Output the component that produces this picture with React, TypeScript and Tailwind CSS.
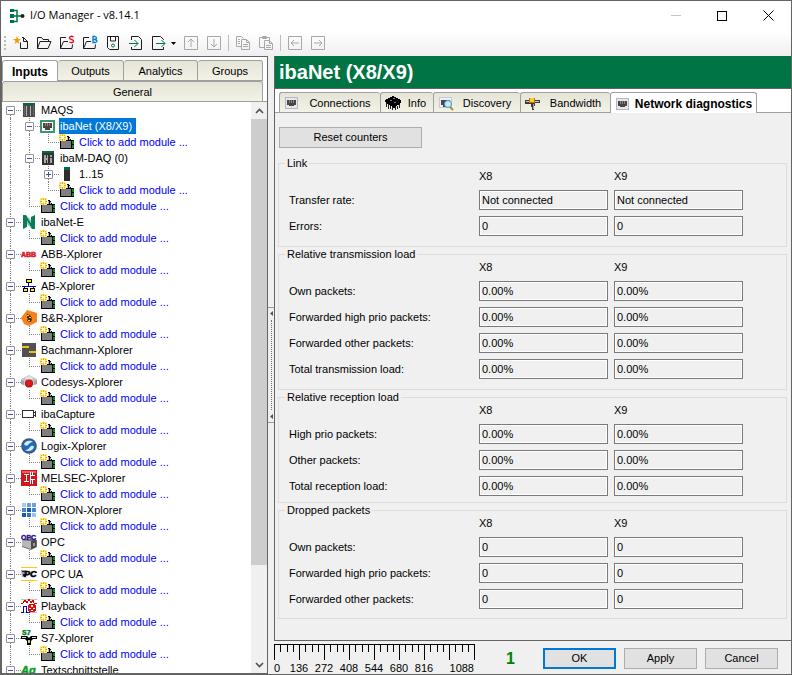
import type { ReactNode } from 'react';

type TreeNode = {
    label: string;
    icon: ReactNode;
    children?: TreeNode[];
    collapsed?: boolean;
    selected?: boolean;
    link?: boolean;
};

type Guide = 'line' | 'blank';

const Icon = ({ children }: { children: ReactNode }) => (
    <svg width="16" height="16" viewBox="0 0 16 16" fill="none" className="shrink-0" shapeRendering="crispEdges" aria-hidden="true">
        {children}
    </svg>
);

/* ---------- tree icons ---------- */

const AddModuleIcon = () => (
    <Icon>
        <path d="M1 6h7V2h2v1h1v2h1v1h1v9H1z" fill="#000" />
        <path d="M2 7h10v7H2z" fill="#808080" />
        <path d="M8 3h1v3H8zM10 4h1v2h-1z" fill="#b8b8b8" />
        <path d="M13 6h2v9h-2z" fill="#000" />
        <path d="M13 7h2v3h-2zM13 11h2v3h-2z" fill="#008c1e" />
        <path d="M0 0h7v7H0z" fill="#ffe680" />
        <path d="M3 0h1v7H3zM0 3h7v1H0zM1 1h1v1H1zM5 1h1v1H5zM1 5h1v1H1zM5 5h1v1H5z" fill="#e8b400" />
        <path d="M2 2h3v3H2z" fill="#fffce0" />
    </Icon>
);

const RackIcon = () => (
    <Icon>
        <path d="M2 1h12v14H2z" fill="#4a4a4a" />
        <path d="M2 1h12v2H2z" fill="#006b3f" />
        <path d="M5 4h1v10H5zM9 4h1v10H9z" fill="#b5b5b5" />
        <path d="M3 4h1v10H3zM12 4h1v10h-1z" fill="#666" />
    </Icon>
);

const PortIcon = () => (
    <Icon>
        <path d="M1 2h13v12H1z" fill="#b4b8c2" />
        <path d="M2 3h11v10H2z" fill="#e6e7ec" />
        <path d="M3 5h9v5h-2v1H5v-1H3z" fill="#4a4545" />
        <path d="M5 5h1v3H5zM7 5h1v3H7zM9 5h1v3H9z" fill="#8f836a" />
    </Icon>
);

const NetPortIcon = () => (
    <Icon>
        <path d="M0 2h15v13H0z" fill="#3a9670" />
        <path d="M2 4h11v9H2z" fill="#fff" />
        <path d="M3 5h9v5h-2v2H5v-2H3z" fill="#4a4545" />
        <path d="M5 5h1v3H5zM7 5h1v3H7zM9 5h1v3H9z" fill="#8f836a" />
    </Icon>
);

const DaqIcon = () => (
    <Icon>
        <path d="M2 2h12v13H2z" fill="#333" />
        <path d="M2 1h12v2H2z" fill="#006b3f" />
        <path d="M4 5h2v3h1V5h1v8H7v-3H6v3H4zM10 5h2v2h-2zM10 8h2v5h-2z" fill="#a8a8a8" />
    </Icon>
);

const SlotIcon = () => (
    <Icon>
        <path d="M5 2h6v13H5z" fill="#2d2d2d" />
        <path d="M5 1h6v3H5z" fill="#006b3f" />
    </Icon>
);

const NetEIcon = () => (
    <svg width="16" height="16" viewBox="0 0 16 16" className="shrink-0" aria-hidden="true">
        <path d="M2 1h3l5 8V3l4-2v14h-3L6 7v6l-4 2z" fill="#0b7d56" />
        <path d="M5 1l5 5v3zM6 7l5 8-5-5z" fill="#8ccbb2" />
    </svg>
);

const AbbIcon = () => (
    <svg width="16" height="16" viewBox="0 0 16 16" className="shrink-0" aria-hidden="true">
        <text x="0" y="11" fontSize="7" fontWeight="700" fill="#d8202c" stroke="#d8202c" strokeWidth=".6">ABB</text>
    </svg>
);

const AbIcon = () => (
    <Icon>
        <path d="M7 5h1v3h7v1h-2v2h-1V9H4v2H3V9H1V8h6z" fill="#0000c8" />
        <path d="M5 1h6v4H5zM2 10h5v4H2zM9 10h5v4H9z" fill="#000" />
        <path d="M6 2h4v2H6zM3 11h3v2H3zM10 11h3v2h-3z" fill="#ffee00" />
    </Icon>
);

const BrIcon = () => (
    <svg width="16" height="16" viewBox="0 0 16 16" className="shrink-0" aria-hidden="true">
        <path d="M0 8l6-8 10 3v9l-8 4-5-2z" fill="#f5821f" />
        <path d="M6 4l3 1 2 3-1 1-4-1zM7 8l4 1-1 3-4-1z" fill="#4a2c00" />
        <path d="M6 5h2v1H6zM8 7h2v1H8zM7 10h2v1H7z" fill="#ffd400" />
    </svg>
);

const BachmannIcon = () => (
    <Icon>
        <path d="M1 1h14v14H1z" fill="#505055" />
        <path d="M1 4h7v2H1zM8 9h7v2H8z" fill="#f5c400" />
    </Icon>
);

const CodesysIcon = () => (
    <svg width="16" height="16" viewBox="0 0 16 16" className="shrink-0" aria-hidden="true">
        <path d="M0 5l8-4 8 4v5l-3 1H3l-3-1z" fill="#c4c4c4" />
        <path d="M3 4l5-2 5 2-5 2z" fill="#e2e2e2" />
        <path d="M0 6l3 1v4l-3-1zM16 6l-3 1v4l3-1z" fill="#a4a4a4" />
        <circle cx="8" cy="9.500" r="4" fill="#b80c12" />
        <circle cx="8" cy="9" r="3" fill="#dc1a20" />
    </svg>
);

const CaptureIcon = () => (
    <Icon>
        <path d="M1 4h12v8H1z" fill="#303030" />
        <path d="M2 5h10v6H2z" fill="#fff" />
        <path d="M13 6h1v1h-1zM13 9h1v1h-1zM14 5h1v6h-1z" fill="#303030" />
    </Icon>
);

const LogixIcon = () => (
    <svg width="16" height="16" viewBox="0 0 16 16" className="shrink-0" aria-hidden="true">
        <circle cx="8" cy="8" r="7.800" fill="#42566d" />
        <circle cx="8" cy="8" r="6.300" fill="#1a6cc4" />
        <path d="M3 6c2-4 7-4 9-2-3 0-4 2-5 3S4 8 3 6zM13 9c-1 4-6 5-9 3 3 0 4-2 5-3s3-2 4 0z" fill="#d6ecff" />
    </svg>
);

const MelsecIcon = () => (
    <Icon>
        <path d="M0 0h16v16H0z" fill="#d6141c" />
        <path d="M1 1h14v2H1z" fill="#ee5c58" />
        <path d="M3 4h5v1H6v6h2v1H3v-1h2V5H3zM9 2h1v3h4v1h-4v3h4v1h-4v4H9zM11 2h1v4h-1zM11 9h1v5h-1z" fill="#fff" />
    </Icon>
);

const OmronIcon = () => (
    <Icon>
        <path d="M1 1h4v4H1z" fill="#a9c8ee" />
        <path d="M6 1h4v4H6zM11 1h4v4h-4z" fill="#6aa0e0" />
        <path d="M1 6h4v4H1zM11 6h4v4h-4z" fill="#4a86d0" />
        <path d="M6 6h4v4H6zM1 11h4v4H1z" fill="#1658b8" />
        <path d="M6 11h4v4H6z" fill="#2e70cc" />
        <path d="M11 11h4v4h-4z" fill="#9cc0ec" />
    </Icon>
);

const OpcIcon = () => (
    <svg width="16" height="16" viewBox="0 0 16 16" className="shrink-0" aria-hidden="true">
        <path d="M1 6l9-2 6 2v7l-6 3-9-3z" fill="#707070" />
        <path d="M1 6l9 1v8l-9-3z" fill="#b8b8b8" />
        <path d="M10 7l5-1v7l-5 2z" fill="#4a4a4a" />
        <path d="M12 9h2v3h-2z" fill="#999" />
        <text x="0" y="6" fontSize="7" fontWeight="700" fill="#2a0a8c" stroke="#2a0a8c" strokeWidth=".4">OPC</text>
    </svg>
);

const OpcUaIcon = () => (
    <svg width="16" height="16" viewBox="0 0 16 16" className="shrink-0" aria-hidden="true">
        <path d="M0 1h16v1H0zM0 14h16v1H0z" fill="#ffc800" />
        <path d="M0 4h5l1 2-1 5H1z" fill="#9a9eb8" />
        <path d="M1 5h3v1H1zM2 8h3v2H2z" fill="#222" />
        <text x="3" y="11" fontSize="9" fontWeight="700" fontStyle="italic" fill="#000" stroke="#000" strokeWidth=".6">PC</text>
    </svg>
);

const PlaybackIcon = () => (
    <Icon>
        <path d="M0 1h16v1H0zM0 14h16v1H0z" fill="#c0c0c0" />
        <path d="M0 5h2l2-3 2 3 2-4 2 4 2-3 1 3h3" stroke="#e80000" />
        <path d="M0 14h2V8h3v6h3V9" stroke="#0000d8" />
        <circle cx="11" cy="10" r="4.500" fill="#e01010" />
        <path d="M10 7h2v2h-2zM8 10h2v1H8zM12 10h2v1h-2zM10 12h2v1h-2z" fill="#fff" />
    </Icon>
);

const S7Icon = () => (
    <svg width="16" height="16" viewBox="0 0 16 16" className="shrink-0" aria-hidden="true">
        <text x="1" y="5" fontSize="7" fontWeight="700" fill="#007a20" stroke="#007a20" strokeWidth=".4">S7</text>
        <path d="M0 6h6l2 2 2-2h6v3h-4l-2 2v4H6v-4L4 9H0z" fill="#000" />
        <path d="M1 7h4v1H1zM11 7h4v1h-4z" fill="#ddd" />
        <path d="M7 10h2v3H7z" fill="#d8c850" />
    </svg>
);

const TextIcon = () => (
    <svg width="16" height="16" viewBox="0 0 16 16" className="shrink-0" aria-hidden="true">
        <text x="0" y="12" fontSize="11" fontWeight="700" fontStyle="italic" fill="#00a31a" stroke="#00a31a" strokeWidth=".5">Ag</text>
    </svg>
);

const addModule: TreeNode = { label: 'Click to add module ...', icon: <AddModuleIcon />, link: true };

const tree: TreeNode[] = [
    {
        label: 'MAQS',
        icon: <RackIcon />,
        children: [
            { label: 'ibaNet (X8/X9)', icon: <NetPortIcon />, selected: true, children: [addModule] },
            {
                label: 'ibaM-DAQ (0)',
                icon: <DaqIcon />,
                children: [{ label: '1..15', icon: <SlotIcon />, collapsed: true }, addModule],
            },
            addModule,
        ],
    },
    { label: 'ibaNet-E', icon: <NetEIcon />, children: [addModule] },
    { label: 'ABB-Xplorer', icon: <AbbIcon />, children: [addModule] },
    { label: 'AB-Xplorer', icon: <AbIcon />, children: [addModule] },
    { label: 'B&R-Xplorer', icon: <BrIcon />, children: [addModule] },
    { label: 'Bachmann-Xplorer', icon: <BachmannIcon />, children: [addModule] },
    { label: 'Codesys-Xplorer', icon: <CodesysIcon />, children: [addModule] },
    { label: 'ibaCapture', icon: <CaptureIcon />, children: [addModule] },
    { label: 'Logix-Xplorer', icon: <LogixIcon />, children: [addModule] },
    { label: 'MELSEC-Xplorer', icon: <MelsecIcon />, children: [addModule] },
    { label: 'OMRON-Xplorer', icon: <OmronIcon />, children: [addModule] },
    { label: 'OPC', icon: <OpcIcon />, children: [addModule] },
    { label: 'OPC UA', icon: <OpcUaIcon />, children: [addModule] },
    { label: 'Playback', icon: <PlaybackIcon />, children: [addModule] },
    { label: 'S7-Xplorer', icon: <S7Icon />, children: [addModule] },
    { label: 'Textschnittstelle', icon: <TextIcon />, children: [] },
];

const Branch = ({ node, first, last }: { node: TreeNode; first: boolean; last: boolean }) => (
    <span className="relative flex w-[19px] shrink-0 flex-col pl-2">
        <span className={`h-[9px] border-b border-dotted border-[#808080] ${first ? '' : 'border-l'}`} />
        <span className={`h-[7px] border-dotted border-[#808080] ${last ? '' : 'border-l'}`} />
        {(node.children || node.collapsed) && (
            <button
                aria-label={`${node.collapsed ? 'Expand' : 'Collapse'} ${node.label}`}
                className="absolute top-1 left-1 h-[9px] w-[9px] rounded-[1px] border border-[#919191] bg-white"
            >
                <span className="absolute top-[3px] left-px h-px w-[5px] bg-[#3a55a8]" />
                {node.collapsed && <span className="absolute top-px left-[3px] h-[5px] w-px bg-[#3a55a8]" />}
            </button>
        )}
    </span>
);

const TreeItems = ({ nodes, guides = [] }: { nodes: TreeNode[]; guides?: Guide[] }) => (
    <ul>
        {nodes.map((node, i) => {
            const last = i === nodes.length - 1;
            return (
                <li key={`${node.label}-${i}`}>
                    <div className="flex h-4 whitespace-nowrap">
                        {guides.map((guide, g) => (
                            <span key={g} className="w-[19px] shrink-0 pl-2">
                                {guide === 'line' && <span className="block h-4 border-l border-dotted border-[#808080]" />}
                            </span>
                        ))}
                        <Branch node={node} first={i === 0 && guides.length === 0} last={last} />
                        {node.icon}
                        {node.link ? (
                            <a href="#add" className="ml-[3px] px-px leading-4 text-[#0000ff]">{node.label}</a>
                        ) : (
                            <span className={`ml-[3px] px-px leading-4 ${node.selected ? 'bg-[#0078d7] pr-1 text-white' : ''}`}>
                                {node.label}
                            </span>
                        )}
                    </div>
                    {node.children && <TreeItems nodes={node.children} guides={[...guides, last ? 'blank' : 'line']} />}
                </li>
            );
        })}
    </ul>
);

/* ---------- toolbar ---------- */

const folder = 'M1.500 13.500v-11h4l1.500 2h5.500v2M1.500 13.500h10.500l3-7H4z';
const openFolder = 'M7 2.500H1.500v11h11.500l.5-4M1.500 13.500l3-7H9';
const dark = '#1c1c1c';
const dim = '#a8a8a8';

const toolGroups: { label: string; icon: ReactNode; menu?: boolean }[][] = [
    [
        {
            label: 'New',
            icon: (
                <>
                    <path d="M7.500 7.500v6h7v-7l-4-4H9M10.500 2.500v4h4" stroke={dark} />
                    <path d="M4 1l1 3h3L5.500 6l1 3L4 7.300 1.500 9l1-3L0 4h3z" fill="#f59a0c" />
                </>
            ),
        },
        { label: 'Open', icon: <path d={folder} stroke={dark} /> },
        {
            label: 'Open S',
            icon: (
                <>
                    <path d={openFolder} stroke={dark} />
                    <path d="M14.500 2C13 1 10.500 1 10.500 3s4 1 4 3-2.500 2-4 1" stroke="#e81123" strokeWidth="1.500" />
                </>
            ),
        },
        {
            label: 'Open B',
            icon: (
                <>
                    <path d={openFolder} stroke={dark} />
                    <path d="M11 1.500v6h2.500q1.500-.5 1.500-1.500t-2-1.500h-2 2q1.500-.5 1.500-1.500t-1.500-1.500z" stroke="#0078d7" strokeWidth="1.300" />
                </>
            ),
        },
        {
            label: 'Save',
            icon: (
                <>
                    <path d="M2.500 1.500h11v13h-9l-2-2zM5.500 2v4h5V2" stroke={dark} />
                    <circle cx="8" cy="10.500" r="1.500" stroke="#007443" />
                </>
            ),
        },
        {
            label: 'Import',
            icon: (
                <>
                    <path d="M3.500 5V1.500h7l3 3v10h-10V12" stroke={dark} />
                    <path d="M1 8.500h9M6.500 5l3.500 3.500L6.500 12" stroke="#007443" />
                </>
            ),
        },
        {
            label: 'Export',
            menu: true,
            icon: (
                <>
                    <path d="M12.500 5V4.500l-3-3h-8v13h11V12" stroke={dark} />
                    <path d="M5 8.500h9M10.500 5l3.500 3.500-3.500 3.500" stroke="#007443" />
                </>
            ),
        },
        { label: 'Move up', icon: <path d="M1.500 1.500h13v13h-13zM8 12V4M5 7l3-3 3 3" stroke={dim} /> },
        { label: 'Move down', icon: <path d="M1.500 1.500h13v13h-13zM8 4v8M5 9l3 3 3-3" stroke={dim} /> },
    ],
    [
        {
            label: 'Copy',
            icon: <path d="M6 11.500H1.500v-10h5l2 2M6.500 4.500h5l3 3v7h-8zM11.500 4.500v3h3M3 4.500h2M3 6.500h2M3 8.500h2M8 9.500h5M8 11.500h5" stroke={dim} />,
        },
        {
            label: 'Paste',
            icon: <path d="M6 12.500H1.500v-10h10V5M4.500 1.500h4v2h-4zM6.500 5.500h5l3 3v6h-8zM11.500 5.500v3h3M8 10.500h5M8 12.500h5" stroke={dim} />,
        },
    ],
    [
        { label: 'Back', icon: <path d="M1.500 1.500h13v13h-13zM12 8H4M7 5L4 8l3 3" stroke={dim} /> },
        { label: 'Forward', icon: <path d="M1.500 1.500h13v13h-13zM4 8h8M9 5l3 3-3 3" stroke={dim} /> },
    ],
];

const Toolbar = () => (
    <div role="toolbar" className="flex h-[25px] shrink-0 items-center bg-gradient-to-b from-white to-[#efefef] pb-px pl-[3px]">
        <span className="mr-[3px] h-[14px] border-l-2 border-dotted border-[#bbb]" />
        {toolGroups.map((group, i) => (
            <div key={i} className="flex items-center">
                {i > 0 && <span className="ml-[3px] mr-[2px] h-4 w-px bg-[#bdbdbd]" />}
                {group.map((tool) => (
                    <button key={tool.label} aria-label={tool.label} className="flex h-6 items-center pr-[3px] pl-1">
                        <svg width="16" height="16" viewBox="0 0 16 16" fill="none" aria-hidden="true">
                            {tool.icon}
                        </svg>
                        {tool.menu && (
                            <svg width="5" height="3" viewBox="0 0 5 3" className="ml-1" aria-hidden="true">
                                <path d="M0 0h5L2.500 3z" fill="#000" />
                            </svg>
                        )}
                    </button>
                ))}
            </div>
        ))}
    </div>
);

const TitleBar = () => (
    <header className="flex h-[30px] shrink-0 items-center bg-white pb-px pl-2">
        <svg width="16" height="16" viewBox="0 0 16 16" fill="none" aria-hidden="true">
            <path d="M4 2.500h4v11H4M4 8h9" stroke="#007443" strokeWidth="1.500" />
            <path d="M1 1h4v3H1zM1 6h4v4H1zM1 12h4v3H1z" fill="#007443" />
            <circle cx="13.500" cy="8" r="2" fill="#222" />
        </svg>
        <h1 className="ml-[5px] flex-1 font-['Open_Sans','Noto_Sans',sans-serif] text-[11px]">I/O Manager - v8.14.1</h1>
        <button aria-label="Minimize" className="flex h-full w-[46px] items-center justify-center">
            <span className="h-px w-[10px] bg-[#c4c4c4]" />
        </button>
        <button aria-label="Maximize" className="flex h-full w-[46px] items-center justify-center">
            <span className="h-[10px] w-[10px] border border-black" />
        </button>
        <button aria-label="Close" className="flex h-full w-[46px] items-center justify-center">
            <svg width="11" height="11" viewBox="0 0 11 11" aria-hidden="true">
                <path d="M.5.5l10 10M10.500.5l-10 10" stroke="#000" />
            </svg>
        </button>
    </header>
);

/* ---------- left panel ---------- */

const Sidebar = () => (
    <aside className="flex w-[267px] shrink-0 flex-col border border-[#646464] bg-white">
        <div role="tablist" className="mr-1 pt-[3px]">
            <div className="grid grid-cols-[56px_66px_74px_1fr]">
                <button role="tab" aria-selected="true" className="h-[21px] rounded-t-[3px] border border-b-0 border-[#a0a0a0] bg-white pt-px text-xs font-bold">
                    Inputs
                </button>
                {['Outputs', 'Analytics', 'Groups'].map((name) => (
                    <button
                        key={name}
                        role="tab"
                        aria-selected="false"
                        className="h-[21px] rounded-t-[3px] border border-l-0 border-[#a0a0a0] bg-gradient-to-b from-[#e5e4d6] to-[#f3f2e8] pt-px"
                    >
                        {name}
                    </button>
                ))}
            </div>
            <button
                role="tab"
                aria-selected="false"
                className="block h-5 w-full rounded-t-[3px] border border-b-0 border-[#a0a0a0] bg-gradient-to-b from-[#e5e4d6] to-[#f3f2e8] pt-px"
            >
                General
            </button>
        </div>
        <div className="flex min-h-0 flex-1 border-t border-[#a0a0a0]">
            <nav aria-label="Modules" className="min-w-0 flex-1 overflow-hidden">
                <TreeItems nodes={tree} />
            </nav>
            <div className="flex w-4 shrink-0 flex-col bg-[#f0f0f0]">
                <button aria-label="Scroll up" className="flex h-[17px] items-center justify-center">
                    <svg width="9" height="6" viewBox="0 0 9 6" fill="none" aria-hidden="true">
                        <path d="M1 5l3.500-3.500L8 5" stroke="#505050" strokeWidth="1.600" />
                    </svg>
                </button>
                <div className="flex-1">
                    <div className="h-[83%] bg-[#cdcdcd]" />
                </div>
                <button aria-label="Scroll down" className="flex h-[17px] items-center justify-center">
                    <svg width="9" height="6" viewBox="0 0 9 6" fill="none" aria-hidden="true">
                        <path d="M1 1l3.500 3.500L8 1" stroke="#505050" strokeWidth="1.600" />
                    </svg>
                </button>
            </div>
        </div>
    </aside>
);

const Splitter = () => (
    <div className="flex w-[6px] shrink-0 flex-col justify-center">
        <div className="flex h-[116px] flex-col items-center justify-between border-y border-[#9a9a9a] py-[3px]">
            <svg width="3" height="5" viewBox="0 0 3 5" aria-hidden="true">
                <path d="M3 0v5L0 2.500z" fill="#555" />
            </svg>
            <span className="my-1 flex-1 border-l border-dotted border-[#707070]" />
            <svg width="3" height="5" viewBox="0 0 3 5" aria-hidden="true">
                <path d="M3 0v5L0 2.500z" fill="#555" />
            </svg>
        </div>
    </div>
);

/* ---------- right panel ---------- */

const ChipIcon = () => (
    <Icon>
        <path d="M0 5l8-4 8 4v3l-7 5-9-6z" fill="#000" />
        <path d="M1 8h1v4H1zM3 9h1v5H3zM5 11h1v3H5zM7 12h1v3H7zM10 12h1v3h-1zM12 11h1v3h-1zM14 9h1v4h-1z" fill="#222" />
        <path d="M5 5h2v1H5zM8 3h2v1H8zM9 7h2v1H9z" fill="#777" />
    </Icon>
);

const DiscoveryIcon = () => (
    <svg width="16" height="16" viewBox="0 0 16 16" fill="none" className="shrink-0" aria-hidden="true">
        <path d="M1 2h13v11H1z" fill="#c5cad6" />
        <path d="M2 3h11v9H2z" fill="#eef0f4" />
        <path d="M3 5h9v5h-2v2H5v-2H3z" fill="#4a4545" />
        <path d="M12 12l3 3" stroke="#c58a20" strokeWidth="2" />
        <circle cx="10" cy="9" r="3.500" fill="#c8e8fb" stroke="#4d93cc" />
    </svg>
);

const BandwidthIcon = () => (
    <Icon>
        <path d="M0 5h15v3h-5l-1 7H7L6 9H0z" fill="#3c3c3c" />
        <path d="M1 6h13v1H1z" fill="#c8c8c8" />
        <path d="M8 9h1v5H8z" fill="#aaa" />
        <path d="M4 3h6v5H4z" fill="#b87b00" />
        <path d="M5 3h4v4H5z" fill="#ffc933" />
    </Icon>
);

const pageTabs = [
    { label: 'Connections', icon: <PortIcon />, width: 'w-[101px]', active: false },
    { label: 'Info', icon: <ChipIcon />, width: 'w-[53px]', active: false },
    { label: 'Discovery', icon: <DiscoveryIcon />, width: 'w-[87px]', active: false },
    { label: 'Bandwidth', icon: <BandwidthIcon />, width: 'w-[90px]', active: false },
    { label: 'Network diagnostics', icon: <PortIcon />, width: 'w-[147px]', active: true },
];

const groups = [
    { title: 'Link', pad: 'pb-[10px]', rows: [['Transfer rate:', 'Not connected'], ['Errors:', '0']] },
    {
        title: 'Relative transmission load',
        pad: 'pb-[10px]',
        rows: [
            ['Own packets:', '0.00%'],
            ['Forwarded high prio packets:', '0.00%'],
            ['Forwarded other packets:', '0.00%'],
            ['Total transmission load:', '0.00%'],
        ],
    },
    {
        title: 'Relative reception load',
        pad: 'pb-[6px]',
        rows: [
            ['High prio packets:', '0.00%'],
            ['Other packets:', '0.00%'],
            ['Total reception load:', '0.00%'],
        ],
    },
    {
        title: 'Dropped packets',
        pad: 'pb-[9px]',
        rows: [
            ['Own packets:', '0'],
            ['Forwarded high prio packets:', '0'],
            ['Forwarded other packets:', '0'],
        ],
    },
];

const fieldClass = 'h-5 w-full border border-[#7a7a7a] bg-[#f0f0f0] px-[2px] shadow-[inset_0_0_0_1px_#fff] outline-none';

const CounterGroup = ({ title, rows, pad }: { title: string; rows: string[][]; pad: string }) => (
    <fieldset className={`min-w-0 border border-[#dcdcdc] pl-[10px] ${pad}`}>
        <legend className="-ml-1 px-[2px] leading-[14px]">{title}</legend>
        <div className="grid grid-cols-[184px_129px_129px] gap-x-[6px] leading-3">
            <span className="col-start-2">X8</span>
            <span>X9</span>
        </div>
        <div className="mt-2 flex flex-col gap-[6px]">
            {rows.map(([label, value]) => {
                const id = `${title}-${label}`.replace(/\W+/g, '-').toLowerCase();
                return (
                    <div key={label} className="grid grid-cols-[184px_129px_129px] items-center gap-x-[6px]">
                        <label htmlFor={id}>{label}</label>
                        <input id={id} readOnly value={value} className={fieldClass} />
                        <input aria-label={`${label} X9`} readOnly value={value} className={fieldClass} />
                    </div>
                );
            })}
        </div>
    </fieldset>
);

const Ruler = () => (
    <svg width="202" height="30" viewBox="0 0 202 30" className="shrink-0" role="img" aria-label="Scale from 0 to 1088">
        <g shapeRendering="crispEdges" fill="#000">
            <rect width="201" height="1" />
            {Array.from({ length: 33 }, (_, i) => (
                <rect key={i} x={Math.round(i * 6.25)} width="1" height={i % 4 === 0 ? 16 : 8} />
            ))}
        </g>
        <g fontSize="11" textAnchor="middle">
            <text x="0" y="28" textAnchor="start">0</text>
            {[136, 272, 408, 544, 680, 816].map((mark, i) => (
                <text key={mark} x={(i + 1) * 25} y="28">{mark}</text>
            ))}
            <text x="200" y="28" textAnchor="end">1088</text>
        </g>
    </svg>
);

const Footer = () => (
    <footer className="flex h-[33px] shrink-0 items-center pt-[2px] pr-[13px]">
        <Ruler />
        <span className="flex-1 pl-[30px] text-base font-bold text-[#008000]">1</span>
        <div className="flex gap-2">
            <button className="h-[21px] w-[73px] border-2 border-[#0078d7] bg-[#e1e1e1]">OK</button>
            <button className="h-[21px] w-[73px] border border-[#adadad] bg-[#e1e1e1]">Apply</button>
            <button className="h-[21px] w-[73px] border border-[#adadad] bg-[#e1e1e1]">Cancel</button>
        </div>
    </footer>
);

const App = () => (
    <div className="flex h-screen flex-col overflow-hidden border border-[#646464] bg-[#f0f0f0] font-['Liberation_Sans',Arial,sans-serif] text-[11px] text-black">
        <TitleBar />
        <Toolbar />
        <div className="flex min-h-0 flex-1">
            <Sidebar />
            <Splitter />
            <div className="flex min-w-0 flex-1 flex-col">
                <main className="flex min-h-0 flex-1 flex-col border-b border-l border-[#646464]">
                    <h2 className="flex h-[33px] shrink-0 items-center border-b border-[#646464] bg-[#007443] pl-1 text-xl font-bold text-white">
                        ibaNet (X8/X9)
                    </h2>
                    <div role="tablist" className="flex shrink-0 border-b border-[#a0a0a0] bg-white pt-[3px] pl-1">
                        {pageTabs.map((tab) => (
                            <button
                                key={tab.label}
                                role="tab"
                                aria-selected={tab.active}
                                className={`flex h-5 items-center rounded-t-[3px] border border-b-0 border-[#a0a0a0] pt-px pl-1 ${tab.width} ${
                                    tab.active ? '-mb-px h-[21px] bg-white text-xs font-bold' : 'border-r-0 bg-gradient-to-b from-[#e5e4d6] to-[#f3f2e8]'
                                }`}
                            >
                                {tab.icon}
                                <span className="flex-1 text-center whitespace-nowrap">{tab.label}</span>
                            </button>
                        ))}
                    </div>
                    <div role="tabpanel" className="min-h-0 flex-1 overflow-hidden pt-[14px] pr-1 pl-[3px]">
                        <button className="ml-px h-[21px] w-[143px] border border-[#adadad] bg-[#e1e1e1]">Reset counters</button>
                        <div className="mt-2">
                            {groups.map((group) => (
                                <CounterGroup key={group.title} {...group} />
                            ))}
                        </div>
                    </div>
                </main>
                <Footer />
            </div>
        </div>
    </div>
);

export default App;
